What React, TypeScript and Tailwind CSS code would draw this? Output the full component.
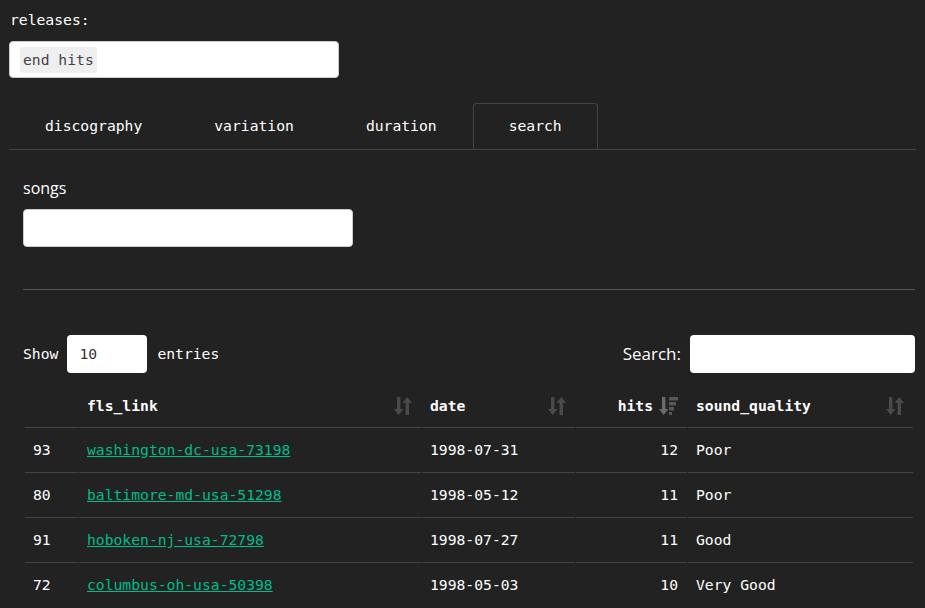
import React from 'react';

const rows = [
  { n: 93, link: 'washington-dc-usa-73198', date: '1998-07-31', hits: 12, q: 'Poor' },
  { n: 80, link: 'baltimore-md-usa-51298', date: '1998-05-12', hits: 11, q: 'Poor' },
  { n: 91, link: 'hoboken-nj-usa-72798', date: '1998-07-27', hits: 11, q: 'Good' },
  { n: 72, link: 'columbus-oh-usa-50398', date: '1998-05-03', hits: 10, q: 'Very Good' },
];

const tabs = ['discography', 'variation', 'duration', 'search'];

function SortBoth() {
  return (
    <svg width="20" height="22" viewBox="0 0 20 22" fill="#4a4a4a">
      <path d="M4 2h3.4v12h3.1l-4.8 6L1 14h3z" />
      <path d="M12.6 20H16V8h3l-4.7-6L9.5 8h3.1z" />
    </svg>
  );
}

function SortDesc() {
  return (
    <svg width="20" height="22" viewBox="0 0 20 22">
      <path d="M4 2h3.4v12h3.1l-4.8 6L1 14h3z" fill="#6a6a6a" />
      <rect x="11" y="2" width="9" height="3.5" fill="#575757" />
      <rect x="11" y="7" width="7" height="3.5" fill="#575757" />
      <rect x="11" y="12" width="5" height="3.5" fill="#575757" />
      <rect x="11" y="17" width="3" height="3" fill="#575757" />
    </svg>
  );
}

export default function App() {
  return (
    <div className="min-h-screen bg-[#222] text-white font-['DejaVu_Sans_Mono',monospace] text-[14.7px] leading-5 px-[9px] pt-[10px]">
      <div className="pl-px">releases:</div>
      <div className="mt-[11px] w-[330px] h-[37px] bg-white rounded-[4px] border border-[#ccc] flex items-center pl-[10px]">
        <span className="bg-[#efefef] text-[#444] rounded-[3px] px-[3px] h-[26px] leading-[26px]">end hits</span>
      </div>

      <ul className="mt-[25px] flex border-b border-[#444]">
        {tabs.map((t) => (
          <li
            key={t}
            className={
              t === 'search'
                ? 'px-[35px] h-[46px] flex items-center border border-[#444] border-b-transparent rounded-t-[4px] -mb-px bg-[#222]'
                : 'px-[35px] h-[46px] flex items-center border border-transparent'
            }
          >
            {t}
          </li>
        ))}
      </ul>

      <div className="pl-[14px] pr-px">
        <div className="mt-[28px] font-['Open_Sans',sans-serif] text-[16px]">songs</div>
        <div className="mt-[11px] w-[330px] h-[38px] bg-white rounded-[4px] border border-[#ccc]" />
        <div className="mt-[42px] border-t border-[#555]" />

        <div className="mt-[45px] flex items-center justify-between">
          <div className="flex items-center">
            <span>Show</span>
            <div className="ml-[9px] w-[80px] h-[38px] bg-white rounded-[4px] text-[#333] flex items-center pl-[12px]">10</div>
            <span className="ml-[10px]">entries</span>
          </div>
          <div className="flex items-center">
            <span className="font-['Open_Sans',sans-serif] text-[17px]">Search:</span>
            <div className="ml-[9px] w-[225px] h-[38px] bg-white rounded-[4px]" />
          </div>
        </div>

        <table className="mt-[12px] ml-px table-fixed border-separate border-spacing-x-[1px] border-spacing-y-0 w-[890px]">
          <colgroup>
            <col className="w-[53px]" />
            <col className="w-[342px]" />
            <col className="w-[153px]" />
            <col className="w-[111px]" />
            <col />
          </colgroup>
          <thead>
            <tr className="h-[42px] font-bold">
              <th />
              <th className="text-left pl-[8px] relative">
                fls_link
                <span className="absolute right-[8px] top-[10px]"><SortBoth /></span>
              </th>
              <th className="text-left pl-[8px] relative">
                date
                <span className="absolute right-[8px] top-[10px]"><SortBoth /></span>
              </th>
              <th className="text-right pr-[9px]">
                <span className="inline-flex items-center gap-[5px]">
                  hits
                  <SortDesc />
                </span>
              </th>
              <th className="text-left pl-[8px] relative">
                sound_quality
                <span className="absolute right-[8px] top-[10px]"><SortBoth /></span>
              </th>
            </tr>
          </thead>
          <tbody>
            {rows.map((r) => (
              <tr key={r.n} className="h-[45px]">
                <td className="border-t border-[#444] pl-[8px]">{r.n}</td>
                <td className="border-t border-[#444] pl-[8px]">
                  <a href="#" className="text-[#00bc8c] underline">{r.link}</a>
                </td>
                <td className="border-t border-[#444] pl-[8px]">{r.date}</td>
                <td className="border-t border-[#444] pr-[9px] text-right">{r.hits}</td>
                <td className="border-t border-[#444] pl-[8px]">{r.q}</td>
              </tr>
            ))}
          </tbody>
        </table>
      </div>
    </div>
  );
}
